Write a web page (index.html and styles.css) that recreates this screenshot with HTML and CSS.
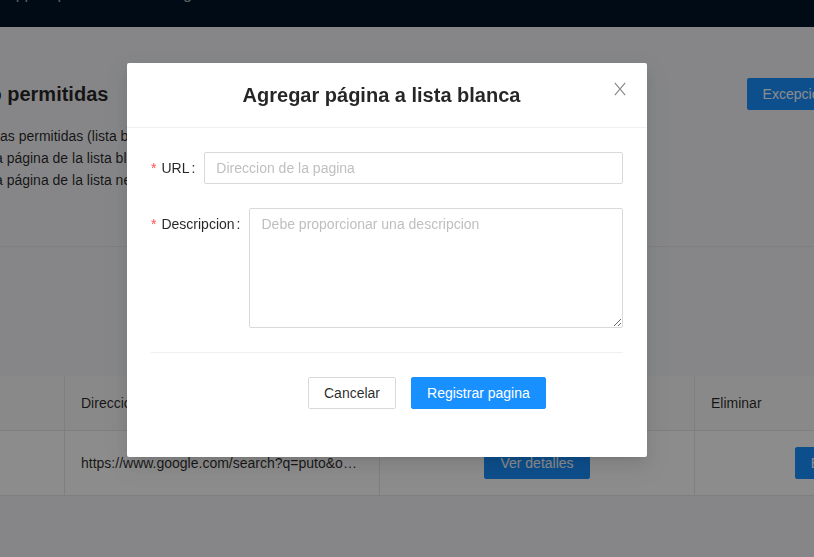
FILE: index.html
```html
<!DOCTYPE html>
<html lang="es">
<head>
<meta charset="utf-8">
<title>Agregar página a lista blanca</title>
<link rel="stylesheet" href="styles.css">
</head>
<body>
<div class="page">
  <header class="nav"><span class="brand">App Supervision de navegacion</span></header>
  <main class="content">
    <section class="page-header">
      <div class="ph-row">
        <h1 class="ph-title">Páginas no permitidas</h1>
        <button class="btn btn-primary" type="button">Excepciones</button>
      </div>
      <div class="ph-desc">
        <p class="l1">Lista de las paginas permitidas (lista blanca) del sistema</p>
        <p class="l2">Seleccione una página de la lista blanca para ver detalles</p>
        <p class="l3">Seleccione una página de la lista negra para eliminarla</p>
      </div>
    </section>
    <section class="table-wrap">
      <table class="table">
        <colgroup>
          <col class="c1"><col class="c2"><col class="c3"><col class="c4">
        </colgroup>
        <thead>
          <tr><th>#</th><th>Direccion</th><th>Detalles</th><th>Eliminar</th></tr>
        </thead>
        <tbody>
          <tr>
            <td>1</td>
            <td class="ellipsis">https://www.google.com/search?q=puto&amp;oq=puto&amp;aqs=chrome..69i57j0l5.1234j0j7&amp;sourceid=chrome</td>
            <td class="center"><button class="btn btn-primary" type="button">Ver detalles</button></td>
            <td class="center"><button class="btn btn-primary" type="button">Eliminar</button></td>
          </tr>
        </tbody>
      </table>
    </section>
  </main>
</div>

<div class="mask"></div>

<div class="modal" role="dialog">
  <div class="modal-header">
    <h2 class="modal-title">Agregar página a lista blanca</h2>
    <button class="modal-close" type="button" aria-label="Cerrar">
      <svg width="12" height="14" viewBox="0 0 12 14"><path d="M0.8 0.8 L11.2 13.2 M11.2 0.8 L0.8 13.2" stroke="#8c8c8c" stroke-width="1.2" fill="none"/></svg>
    </button>
  </div>
  <div class="modal-body">
    <div class="form-item">
      <label class="form-label"><span class="req">*</span>URL<span class="colon">:</span></label>
      <input class="input" type="text" placeholder="Direccion de la pagina">
    </div>
    <div class="form-item">
      <label class="form-label"><span class="req">*</span>Descripcion<span class="colon">:</span></label>
      <textarea class="input textarea" placeholder="Debe proporcionar una descripcion"></textarea>
    </div>
    <div class="divider"></div>
    <div class="actions">
      <button class="btn btn-default" type="button">Cancelar</button>
      <button class="btn btn-primary" type="button">Registrar pagina</button>
    </div>
  </div>
</div>
</body>
</html>
```

FILE: styles.css
```css
* { box-sizing: border-box; }

html, body {
  margin: 0;
  height: 100%;
  overflow: hidden;
}

body {
  font-family: "Liberation Sans", Arial, sans-serif;
  font-size: 14px;
  line-height: 22px;
  color: rgba(0, 0, 0, 0.85);
  background: #f4f5f7;
}

.page { width: 100%; overflow: hidden; }

.nav {
  height: 27px;
  background: #001529;
  overflow: hidden;
}

.brand {
  display: block;
  margin-top: -14px;
  padding-left: 5px;
  font-size: 16px;
  line-height: 16px;
  color: rgba(255, 255, 255, 0.65);
  white-space: nowrap;
}

.content {
  margin-left: -105px;
  width: 1083px;
}

.page-header {
  padding: 51px 0 55px;
  border-bottom: 1px solid #e8e8e8;
}

.ph-row {
  width: 963px;
  height: 32px;
  display: flex;
  align-items: center;
  justify-content: space-between;
}

.ph-title {
  margin: 0;
  font-size: 20px;
  font-weight: 700;
  line-height: 32px;
}

.ph-desc { margin-top: 15px; }

.ph-desc p {
  margin: 0;
  line-height: 22px;
  white-space: nowrap;
}

.ph-desc .l1 { margin-left: -4px; }
.ph-desc .l2 { margin-left: 12px; }
.ph-desc .l3 { margin-left: 12px; }

.table-wrap { margin-top: 129px; }

.table {
  width: 1083px;
  table-layout: fixed;
  border-collapse: separate;
  border-spacing: 0;
  background: #fff;
}

.c1 { width: 170px; }
.c2 { width: 315px; }
.c3 { width: 315px; }
.c4 { width: 283px; }

.table th,
.table td {
  padding: 16px;
  border-right: 1px solid #e8e8e8;
  border-bottom: 1px solid #e8e8e8;
  text-align: left;
  font-weight: 400;
  line-height: 22px;
  vertical-align: middle;
}

.table th { background: #fafafa; }

.table td { padding: 16px; height: 65px; }

.table .ellipsis {
  white-space: nowrap;
  overflow: hidden;
  text-overflow: ellipsis;
}

.table .center { text-align: center; }

.btn {
  display: inline-block;
  height: 32px;
  padding: 4px 15px;
  font-family: inherit;
  font-size: 14px;
  line-height: 22px;
  border: 1px solid #d9d9d9;
  border-radius: 2px;
  background: #fff;
  color: rgba(0, 0, 0, 0.85);
  white-space: nowrap;
  cursor: pointer;
}

.btn-primary {
  background: #1890ff;
  border-color: #1890ff;
  color: #fff;
}

.mask {
  position: fixed;
  inset: 0;
  background: rgba(0, 0, 0, 0.45);
}

.modal {
  position: fixed;
  top: 63px;
  left: 127px;
  width: 520px;
  background: #fff;
  border-radius: 2px;
  box-shadow: 0 3px 6px -4px rgba(0, 0, 0, 0.12),
              0 6px 16px 0 rgba(0, 0, 0, 0.08),
              0 9px 28px 8px rgba(0, 0, 0, 0.05);
}

.modal-header {
  position: relative;
  height: 65px;
  padding-right: 11px;
  display: flex;
  align-items: center;
  justify-content: center;
  border-bottom: 1px solid #f0f0f0;
}

.modal-title {
  margin: 0;
  font-size: 20px;
  font-weight: 700;
  line-height: 24px;
  color: rgba(0, 0, 0, 0.85);
}

.modal-close {
  position: absolute;
  top: 0;
  right: 0;
  width: 54px;
  height: 52px;
  padding: 0;
  border: 0;
  background: none;
  display: flex;
  align-items: center;
  justify-content: center;
  cursor: pointer;
}

.modal-body { padding: 24px; }

.form-item {
  display: flex;
  align-items: flex-start;
  margin-bottom: 24px;
}

.form-label {
  line-height: 32px;
  white-space: nowrap;
  color: rgba(0, 0, 0, 0.85);
}

.req {
  color: #ff4d4f;
  margin-right: 5px;
}

.colon { margin: 0 9px 0 2px; }

.input {
  flex: 1;
  min-width: 0;
  height: 32px;
  padding: 4px 11px;
  font-family: inherit;
  font-size: 14px;
  line-height: 22px;
  color: rgba(0, 0, 0, 0.85);
  border: 1px solid #d9d9d9;
  border-radius: 2px;
  background: #fff;
  outline: none;
}

.input::placeholder { color: #bfbfbf; }

.textarea {
  display: block;
  height: 120px;
  resize: vertical;
}

.divider {
  height: 1px;
  background: #f0f0f0;
  margin-bottom: 24px;
}

.actions {
  display: flex;
  gap: 15px;
  padding-left: 157px;
  margin-bottom: 24px;
}
```
